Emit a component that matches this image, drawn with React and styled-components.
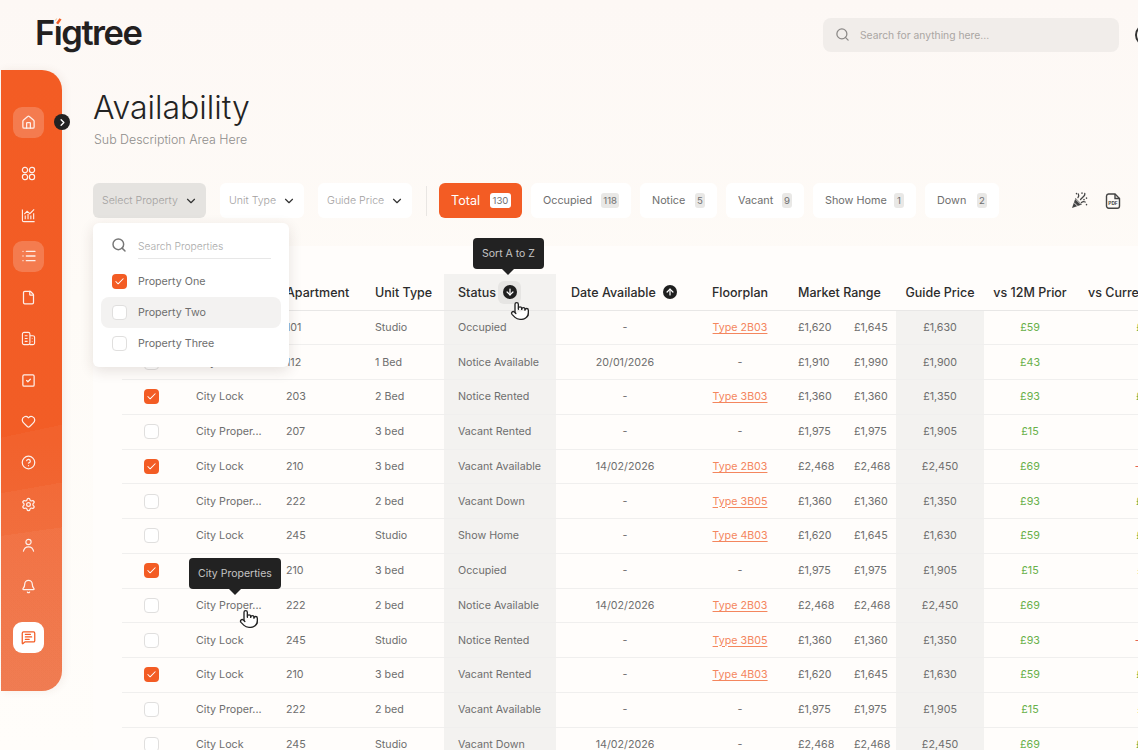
import React from 'react';
import styled, { createGlobalStyle } from 'styled-components';
import {
  House, List, File, SquareCheck, Heart, CircleHelp, Settings, Bell, MessageSquareText,
  Search, ChevronDown, ChevronRight, ArrowDown, ArrowUp, Download, Pointer, Check,
} from 'lucide-react';

const orange = '#f35c24';

const GlobalStyle = createGlobalStyle`
  html, body {
    margin: 0;
    padding: 0;
    background: #fdf9f6;
  }
  body {
    font-family: "Inter", "Lato", sans-serif;
    color: #6e6e6e;
  }
  * {
    box-sizing: border-box;
  }
`;

const Page = styled.div`
  position: relative;
  width: 1138px;
  height: 750px;
  overflow: hidden;
  background: linear-gradient(180deg, #fdf8f5 0%, #fefbf7 40%, #fffdfa 100%);
`;

const Header = styled.header`
  display: flex;
  align-items: center;
  width: 1160px;
  height: 70px;
  padding: 0 3px 0 35px;
`;

const Logo = styled.div`
  font-size: 34.5px;
  font-weight: 600;
  letter-spacing: -1.5px;
  color: #23201f;
  line-height: 1;
  margin-top: -4px;
`;

const LogoI = styled.span`
  position: relative;
  &::after {
    content: '';
    position: absolute;
    left: 1px;
    top: 6px;
    width: 8px;
    height: 7px;
    background: linear-gradient(${orange}, ${orange}) center / 6px 2.5px no-repeat #fdf8f5;
    transform: rotate(-55deg);
  }
`;

const SearchBar = styled.div`
  display: flex;
  align-items: center;
  gap: 10px;
  width: 296px;
  height: 34px;
  margin-left: auto;
  padding: 0 12px;
  border-radius: 8px;
  background: #f1edea;
  font-size: 10.3px;
  color: #aaa6a3;
  margin-top: -1px;
`;

const Avatar = styled.div`
  width: 22px;
  height: 22px;
  margin-left: 16px;
  border: 2px solid #333;
  border-radius: 50%;
`;

const Shell = styled.div`
  display: flex;
  align-items: flex-start;
`;

const Sidebar = styled.nav`
  position: relative;
  display: flex;
  flex-direction: column;
  align-items: center;
  flex-shrink: 0;
  gap: 10.3px;
  width: 61px;
  height: 621px;
  margin-left: 1px;
  padding: 37px 6px 0 0;
  border-radius: 0 20px 20px 0;
  background:
    linear-gradient(168deg, transparent 58%, rgba(255, 255, 255, 0.03) 58%),
    linear-gradient(170deg, transparent 67%, rgba(255, 255, 255, 0.04) 67%),
    linear-gradient(172deg, transparent 74%, rgba(255, 255, 255, 0.04) 74%),
    linear-gradient(180deg, ${orange} 0%, #f25d26 60%, #ee6d3e 100%);
  box-shadow: 2px 0 8px rgba(120, 70, 40, 0.08);
`;

const NavItem = styled.div`
  display: flex;
  align-items: center;
  justify-content: center;
  flex-shrink: 0;
  width: 31px;
  height: 31px;
  border-radius: 9px;
  color: ${p => (p.$white ? orange : '#fff')};
  background: ${p => (p.$white ? '#fff' : p.$active ? 'rgba(255,255,255,0.22)' : 'transparent')};
  margin-top: ${p => (p.$white ? '9px' : '0')};
  margin-bottom: ${p => (p.$first ? '10px' : '0')};
  opacity: ${p => (p.$white ? 1 : 0.9)};
`;

const Toggle = styled.div`
  position: absolute;
  top: 44px;
  right: -8px;
  display: flex;
  align-items: center;
  justify-content: center;
  width: 16px;
  height: 16px;
  border-radius: 50%;
  background: #222;
  color: #fff;
`;

const Main = styled.main`
  flex: 1;
  min-width: 0;
  padding: 18px 0 0 31px;
`;

const Title = styled.h1`
  margin: 0;
  font-size: 32px;
  line-height: 40px;
  font-weight: 300;
  color: #232323;
`;

const Sub = styled.p`
  margin: 3px 0 0 1px;
  font-size: 12.4px;
  line-height: 18px;
  font-weight: 300;
  color: #8f8d8b;
`;

const Toolbar = styled.div`
  display: flex;
  align-items: center;
  margin-top: 34px;
  height: 35px;
  width: 1100px;
`;

const SelectWrap = styled.div`
  position: relative;
  margin-right: 14px;
`;

const Select = styled.div`
  display: flex;
  align-items: center;
  justify-content: space-between;
  width: ${p => p.$w}px;
  height: 35px;
  padding: 0 8px 0 9px;
  border-radius: 6px;
  font-size: 10.6px;
  font-weight: 300;
  color: #a3a19f;
  background: ${p => (p.$open ? '#e5e3e0' : '#fff')};

  svg {
    color: #333;
  }
`;

const Divider = styled.div`
  width: 1px;
  height: 30px;
  margin-right: 12px;
  background: #e9e6e3;
`;

const Tab = styled.div`
  display: flex;
  align-items: center;
  justify-content: space-between;
  width: ${p => p.$w}px;
  height: 35px;
  margin-right: 9px;
  padding: ${p => (p.$active ? '0 11px 0 12px' : '0 12px')};
  border-radius: 6px;
  font-size: ${p => (p.$active ? '12.6px' : '10.8px')};
  color: ${p => (p.$active ? '#fff' : '#6e6e6e')};
  background: ${p => (p.$active ? orange : '#fff')};
`;

const Badge = styled.span`
  display: flex;
  align-items: center;
  justify-content: center;
  min-width: ${p => (p.$active ? '21px' : '10px')};
  height: 15px;
  padding: 0 2px;
  border-radius: 3px;
  font-size: 9.6px;
  color: #707070;
  background: ${p => (p.$active ? '#fff' : '#e9e8e6')};
`;

const Actions = styled.div`
  display: flex;
  align-items: center;
  gap: 17px;
  margin-left: 63px;
  color: #444;
`;

const Dropdown = styled.div`
  position: absolute;
  top: 40px;
  left: 0;
  z-index: 5;
  width: 196px;
  height: 144px;
  padding: 0 8px;
  border-radius: 6px;
  background: #fff;
  box-shadow: 0 4px 14px rgba(60, 40, 30, 0.13);
`;

const DropSearch = styled.div`
  display: flex;
  align-items: center;
  gap: 11px;
  height: 43px;
  padding: 0 0 0 10px;
  font-size: 10.3px;
  font-weight: 300;
  color: #aaa;

  svg {
    color: #777;
    flex-shrink: 0;
  }
`;

const DropInput = styled.div`
  width: 133px;
  padding: 7px 0 6px;
  margin-top: 2px;
  border-bottom: 1.5px solid #e7e7e7;
`;

const Option = styled.div`
  display: flex;
  align-items: center;
  gap: 11px;
  height: 31px;
  padding: 0 11px;
  border-radius: 8px;
  font-size: 10.7px;
  color: #6e6e6e;
  background: ${p => (p.$hover ? '#f3f2f1' : 'transparent')};
`;

const Box = styled.span`
  display: flex;
  align-items: center;
  justify-content: center;
  flex-shrink: 0;
  width: 15px;
  height: 15px;
  border-radius: 4px;
  color: #fff;
  border: ${p => (p.$on ? 'none' : '1.5px solid #e0dfde')};
  background: ${p => (p.$on ? orange : '#fff')};
`;

const Panel = styled.section`
  width: 1200px;
  margin-top: 28px;
  padding: 28px 0 0 29px;
  border-radius: 6px 0 0 0;
  background: #fffdfb;
`;

const columns = '74px 90px 89px 69px 112px 138px 92px 110px 88px 92px 140px';

const Row = styled.div`
  display: grid;
  grid-template-columns: ${columns};
  height: ${p => (p.$head ? '36.5px' : '34.75px')};
  border-bottom: ${p => (p.$head ? '1.5px solid #e8e7e6' : '1.5px solid #f0efee')};
  font-size: 10.7px;
  color: #6e6e6e;
`;

const Cell = styled.div`
  position: relative;
  display: flex;
  align-items: center;
  justify-content: ${p => (p.$center ? 'center' : 'flex-start')};
  padding-left: ${p => p.$pad || 0}px;
  white-space: nowrap;
  background: ${p => (p.$shade ? '#f3f2f0' : 'transparent')};
  color: ${p => p.$color || 'inherit'};
`;

const HeadCell = styled(Cell)`
  gap: 7px;
  padding-top: 1px;
  font-size: 12.5px;
  font-weight: 500;
  color: #2c2c2c;
`;

const SortIcon = styled.span`
  display: flex;
  align-items: center;
  justify-content: center;
  width: 14px;
  height: 14px;
  border-radius: 50%;
  color: #fff;
  background: #1f1f1f;
`;

const SortHover = styled.span`
  display: flex;
  align-items: center;
  justify-content: center;
  width: 23px;
  height: 23px;
  margin-left: -5px;
  border-radius: 6px;
  background: #e6e5e3;
`;

const Tooltip = styled.div`
  position: absolute;
  z-index: 6;
  left: ${p => p.$left}px;
  bottom: ${p => p.$bottom}px;
  display: flex;
  align-items: center;
  height: 31px;
  padding: 0 9px;
  border-radius: 4px;
  font-size: 10.5px;
  font-weight: 400;
  color: #c4c4c4;
  background: #222;

  &::after {
    content: '';
    position: absolute;
    left: 50%;
    bottom: -6px;
    margin-left: -7px;
    border-left: 7px solid transparent;
    border-right: 7px solid transparent;
    border-top: 7px solid #222;
  }
`;

const Cursor = styled.span`
  position: absolute;
  z-index: 7;
  left: ${p => p.$left}px;
  top: ${p => p.$top}px;
  display: flex;
  color: #222;
`;

const Plan = styled.a`
  color: #f4865e;
  text-decoration: underline;
  text-underline-offset: 2px;
`;

const Range = styled.div`
  display: grid;
  grid-template-columns: 56px auto;
`;

const PopperIcon = () => (
  <svg width="17" height="17" viewBox="0 0 17 17" fill="none" stroke="currentColor" strokeWidth="1.3" strokeLinecap="round">
    <path d="M1 16l3.5-10 6.500 6.500z" fill="currentColor" stroke="none" />
    <path d="M3.2 10.800l3 3M5 7.500l4.500 4.500" stroke="#fdf9f6" strokeWidth="0.9" />
    <path d="M7 5.500c1-1 1-2.200.3-3.500M9.500 7.500l3.500-3.500c.6-.6 1-1.300.8-2.500M10.500 10.500c1-.8 2.300-1 3.700-.5" />
    <path d="M5.500 1.500v.2M11 1v.2M15.500 6v.2M13 7.500v.2M15.500 12.500v.2" strokeWidth="1.5" />
  </svg>
);

const PdfIcon = () => (
  <svg width="16" height="16" viewBox="0 0 16 16" fill="none" stroke="currentColor" strokeWidth="1.4">
    <path d="M3.500 1h6.500l4.500 4.500v7.500a2.200 2.200 0 0 1-2.200 2.200H3.700A2.200 2.200 0 0 1 1.500 13V3A2.200 2.200 0 0 1 3.500 1z" />
    <path d="M10 1v4.500h4.500" />
    <text x="3.3" y="12" fontSize="4.8" fontWeight="700" fill="currentColor" stroke="none">PDF</text>
  </svg>
);

const GridIcon = () => (
  <svg width="15" height="15" viewBox="0 0 16 16" fill="none" stroke="currentColor" strokeWidth="1.3">
    <rect x="1.5" y="1.5" width="5.5" height="5.5" rx="2.4" />
    <rect x="9" y="1.5" width="5.5" height="5.5" rx="2.4" />
    <rect x="1.5" y="9" width="5.5" height="5.5" rx="2.4" />
    <rect x="9" y="9" width="5.5" height="5.5" rx="2.4" />
  </svg>
);

const ChartIcon = () => (
  <svg width="15" height="15" viewBox="0 0 16 16" fill="none" stroke="currentColor" strokeWidth="1.2">
    <path d="M1.500 1.500v11.500a1.500 1.500 0 0 0 1.500 1.500h11.500" />
    <path d="M4.500 12V8M7.500 12V6.500M10.500 12V8M13.500 12V5.500" />
    <path d="M3.500 6.500l3-3 3 2.500 4.500-4.500" />
  </svg>
);

const BuildingIcon = () => (
  <svg width="15" height="15" viewBox="0 0 16 16" fill="none" stroke="currentColor" strokeWidth="1.2">
    <rect x="1.5" y="1.5" width="8" height="13" rx="1.8" />
    <path d="M9.500 5h3.200a1.800 1.800 0 0 1 1.800 1.800v5.900a1.800 1.800 0 0 1-1.800 1.800H9.500" />
    <path d="M4 5h3M4 8h3M4 11h3M12 8v.5M12 11v.5" />
  </svg>
);

const PersonIcon = () => (
  <svg width="15" height="15" viewBox="0 0 16 16" fill="none" stroke="currentColor" strokeWidth="1.2">
    <circle cx="8" cy="4.2" r="2.8" />
    <path d="M2.500 14.500c.6-3.200 2.800-5 5.500-5s4.900 1.800 5.500 5" />
  </svg>
);

const navIcons = [
  { icon: <House size={15} />, active: true, first: true },
  { icon: <GridIcon /> },
  { icon: <ChartIcon /> },
  { icon: <List size={16} />, active: true },
  { icon: <File size={15} /> },
  { icon: <BuildingIcon /> },
  { icon: <SquareCheck size={15} /> },
  { icon: <Heart size={15} /> },
  { icon: <CircleHelp size={15} /> },
  { icon: <Settings size={15} /> },
  { icon: <PersonIcon /> },
  { icon: <Bell size={15} /> },
  { icon: <MessageSquareText size={15} />, white: true },
];

const tabs = [
  { label: 'Occupied', count: 118, w: 100 },
  { label: 'Notice', count: 5, w: 77 },
  { label: 'Vacant', count: 9, w: 78 },
  { label: 'Show Home', count: 1, w: 103 },
  { label: 'Down', count: 2, w: 74 },
];

const rows = [
  { check: false, name: 'City Lock', apt: '101', type: 'Studio', status: 'Occupied', date: '-', plan: 'Type 2B03', low: '£1,620', high: '£1,645', guide: '£1,630', prior: '£59', current: '£59' },
  { check: false, name: 'City Lock', apt: '112', type: '1 Bed', status: 'Notice Available', date: '20/01/2026', plan: '-', low: '£1,910', high: '£1,990', guide: '£1,900', prior: '£43', current: '' },
  { check: true, name: 'City Lock', apt: '203', type: '2 Bed', status: 'Notice Rented', date: '-', plan: 'Type 3B03', low: '£1,360', high: '£1,360', guide: '£1,350', prior: '£93', current: '£93' },
  { check: false, name: 'City Proper...', apt: '207', type: '3 bed', status: 'Vacant Rented', date: '-', plan: '-', low: '£1,975', high: '£1,975', guide: '£1,905', prior: '£15', current: '' },
  { check: true, name: 'City Lock', apt: '210', type: '3 bed', status: 'Vacant Available', date: '14/02/2026', plan: 'Type 2B03', low: '£2,468', high: '£2,468', guide: '£2,450', prior: '£69', current: '-£18' },
  { check: false, name: 'City Proper...', apt: '222', type: '2 bed', status: 'Vacant Down', date: '-', plan: 'Type 3B05', low: '£1,360', high: '£1,360', guide: '£1,350', prior: '£93', current: '£93' },
  { check: false, name: 'City Lock', apt: '245', type: 'Studio', status: 'Show Home', date: '-', plan: 'Type 4B03', low: '£1,620', high: '£1,645', guide: '£1,630', prior: '£59', current: '£59' },
  { check: true, name: '', apt: '210', type: '3 bed', status: 'Occupied', date: '-', plan: '-', low: '£1,975', high: '£1,975', guide: '£1,905', prior: '£15', current: '£15' },
  { check: false, name: 'City Proper...', apt: '222', type: '2 bed', status: 'Notice Available', date: '14/02/2026', plan: 'Type 2B03', low: '£2,468', high: '£2,468', guide: '£2,450', prior: '£69', current: '', tip: true },
  { check: false, name: 'City Lock', apt: '245', type: 'Studio', status: 'Notice Rented', date: '-', plan: 'Type 3B05', low: '£1,360', high: '£1,360', guide: '£1,350', prior: '£93', current: '-£18' },
  { check: true, name: 'City Lock', apt: '210', type: '3 bed', status: 'Vacant Rented', date: '-', plan: 'Type 4B03', low: '£1,620', high: '£1,645', guide: '£1,630', prior: '£59', current: '£59' },
  { check: false, name: 'City Proper...', apt: '222', type: '2 bed', status: 'Vacant Available', date: '-', plan: '-', low: '£1,975', high: '£1,975', guide: '£1,905', prior: '£15', current: '£15' },
  { check: false, name: 'City Lock', apt: '245', type: 'Studio', status: 'Vacant Down', date: '14/02/2026', plan: '-', low: '£2,468', high: '£2,468', guide: '£2,450', prior: '£69', current: '£69' },
];

const green = '#68b04a';
const red = '#e2574c';

const HandCursor = ({ left, top }) => (
  <Cursor $left={left} $top={top}>
    <Pointer size={20} fill="#fff" strokeWidth={1.6} />
  </Cursor>
);

const CheckBox = ({ on }) => (
  <Box $on={on}>{on && <Check size={11} strokeWidth={2.2} />}</Box>
);

const App = () => (
  <Page>
    <GlobalStyle />
    <Header>
      <Logo>F<LogoI>i</LogoI>gtree</Logo>
      <SearchBar>
        <Search size={15} color="#8b8886" />
        Search for anything here...
      </SearchBar>
      <Avatar />
    </Header>
    <Shell>
      <Sidebar>
        {navIcons.map((item, i) => (
          <NavItem key={i} $active={item.active} $white={item.white} $first={item.first}>{item.icon}</NavItem>
        ))}
        <Toggle><ChevronRight size={11} strokeWidth={3} /></Toggle>
      </Sidebar>
      <Main>
        <Title>Availability</Title>
        <Sub>Sub Description Area Here</Sub>
        <Toolbar>
          <SelectWrap>
            <Select $w={113} $open>
              Select Property
              <ChevronDown size={14} strokeWidth={2} />
            </Select>
            <Dropdown>
              <DropSearch>
                <Search size={16} strokeWidth={2.2} />
                <DropInput>Search Properties</DropInput>
              </DropSearch>
              <Option><CheckBox on />Property One</Option>
              <Option $hover><CheckBox />Property Two</Option>
              <Option><CheckBox />Property Three</Option>
            </Dropdown>
          </SelectWrap>
          <SelectWrap>
            <Select $w={84}>Unit Type<ChevronDown size={14} strokeWidth={2} /></Select>
          </SelectWrap>
          <SelectWrap>
            <Select $w={94}>Guide Price<ChevronDown size={14} strokeWidth={2} /></Select>
          </SelectWrap>
          <Divider />
          <Tab $w={83} $active>Total<Badge $active>130</Badge></Tab>
          {tabs.map(t => (
            <Tab key={t.label} $w={t.w}>{t.label}<Badge>{t.count}</Badge></Tab>
          ))}
          <Actions>
            <PopperIcon />
            <PdfIcon />
            <Download size={16} />
          </Actions>
        </Toolbar>
        <Panel>
          <Row $head>
            <HeadCell />
            <HeadCell />
            <HeadCell>Apartment</HeadCell>
            <HeadCell>Unit Type</HeadCell>
            <HeadCell $shade $pad={14}>
              Status
              <SortHover><SortIcon><ArrowDown size={10} strokeWidth={3} /></SortIcon></SortHover>
              <Tooltip $left={29} $bottom={41}>Sort A to Z</Tooltip>
              <HandCursor left={66} top={27} />
            </HeadCell>
            <HeadCell $pad={15}>
              Date Available
              <SortIcon><ArrowUp size={10} strokeWidth={3} /></SortIcon>
            </HeadCell>
            <HeadCell $center>Floorplan</HeadCell>
            <HeadCell $pad={12}>Market Range</HeadCell>
            <HeadCell $center>Guide Price</HeadCell>
            <HeadCell $center>vs 12M Prior</HeadCell>
            <HeadCell $pad={12}>vs Current Rent</HeadCell>
          </Row>
          {rows.map((r, i) => (
            <Row key={i}>
              <Cell $pad={22}><CheckBox on={r.check} /></Cell>
              <Cell>
                {r.name}
                {r.tip && <Tooltip $left={-7} $bottom={33}>City Properties</Tooltip>}
                {r.tip && <HandCursor left={43} top={20} />}
              </Cell>
              <Cell>{r.apt}</Cell>
              <Cell>{r.type}</Cell>
              <Cell $shade $pad={14}>{r.status}</Cell>
              <Cell $center>{r.date}</Cell>
              <Cell $center>{r.plan === '-' ? '-' : <Plan>{r.plan}</Plan>}</Cell>
              <Cell $pad={12}><Range><span>{r.low}</span><span>{r.high}</span></Range></Cell>
              <Cell $shade $center>{r.guide}</Cell>
              <Cell $center $color={green}>{r.prior}</Cell>
              <Cell $center $color={r.current.startsWith('-') ? red : green}>{r.current}</Cell>
            </Row>
          ))}
        </Panel>
      </Main>
    </Shell>
  </Page>
);

export default App;
